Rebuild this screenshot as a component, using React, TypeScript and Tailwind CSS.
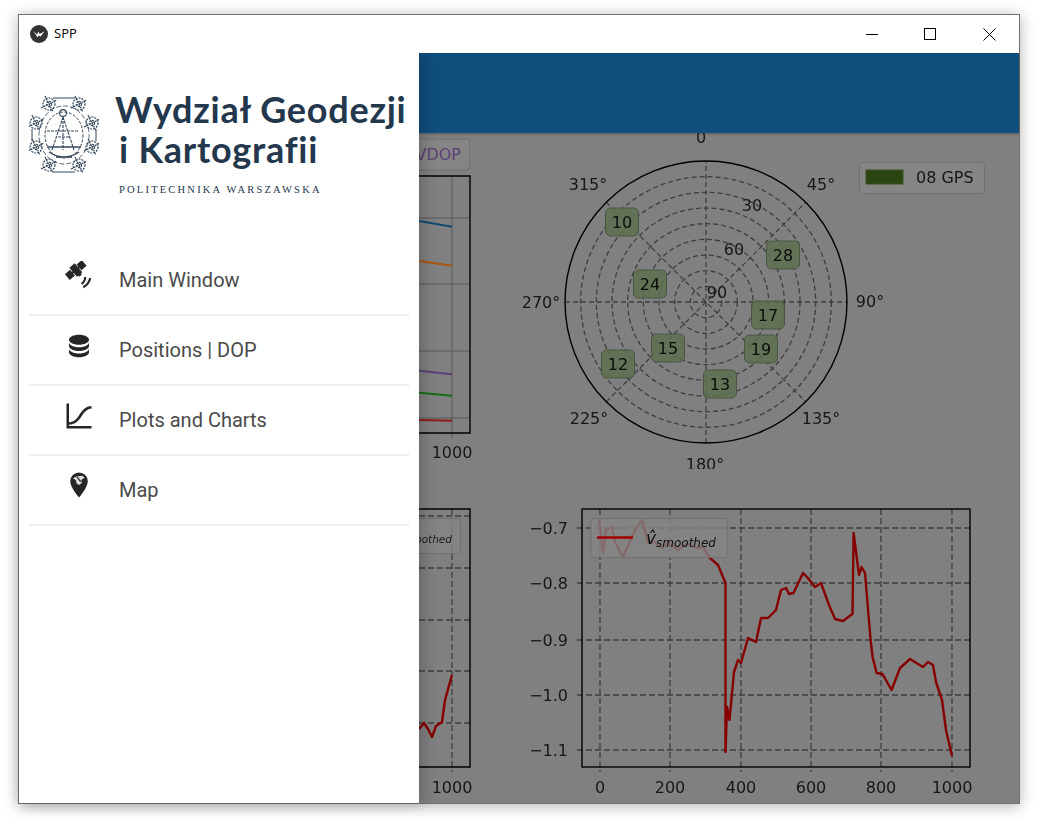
import React from "react";

const nav = [
  { label: "Main Window", icon: "satellite" },
  { label: "Positions | DOP", icon: "database" },
  { label: "Plots and Charts", icon: "chart" },
  { label: "Map", icon: "map" },
];

const sats = [
  { n: "10", x: 622, y: 222 },
  { n: "28", x: 783, y: 255 },
  { n: "24", x: 650, y: 284 },
  { n: "17", x: 768, y: 315 },
  { n: "19", x: 761, y: 349 },
  { n: "15", x: 668, y: 348 },
  { n: "12", x: 618, y: 364 },
  { n: "13", x: 720, y: 384 },
];

const polarLabels = [
  { t: "0", x: 701, y: 143 },
  { t: "45°", x: 821, y: 190 },
  { t: "90°", x: 870, y: 307 },
  { t: "135°", x: 821, y: 424 },
  { t: "180°", x: 705, y: 470 },
  { t: "225°", x: 589, y: 424 },
  { t: "270°", x: 541, y: 308 },
  { t: "315°", x: 588, y: 190 },
];

const vLine =
  "725.5,583 725.5,752 727,707 729.5,720 734,672 738,660 741,663 748,638 756,642 761,618 768,618 776,610 781,590 786,588 789,594 793.5,593 803,573 807,577 815,587 821,583 829,605 835,619 843,621 851,615 852.5,614 853.6,533 859,575 861.5,567 865,573 870.6,640 872.6,657 876.6,673 882.5,674 891.6,690 900,668 910,659 918,664 923,667 928,662 933,665 936,682 942,700 946,730 952,756";
const vLineTop =
  "599,520 603,553 606,530 612,527 615,542 623,557 635,530 642,520 648,543 655,542 662,548 668,543 678,550 687,543 697,548 703,547 710,558 718,565 723,577 725.5,583";

function NavIcon({ name }: { name: string }) {
  if (name === "database") {
    return (
      <svg viewBox="0 0 24 24" className="h-[30px] w-[30px] fill-[#262626]">
        <path d="M12,3C7.58,3 4,4.79 4,7C4,9.21 7.58,11 12,11C16.42,11 20,9.21 20,7C20,4.79 16.42,3 12,3M4,9V12C4,14.21 7.58,16 12,16C16.42,16 20,14.21 20,12V9C20,11.21 16.42,13 12,13C7.58,13 4,11.21 4,9M4,14V17C4,19.21 7.58,21 12,21C16.42,21 20,19.21 20,17V14C20,16.21 16.42,18 12,18C7.58,18 4,16.21 4,14Z" />
      </svg>
    );
  }
  if (name === "chart") {
    return (
      <svg viewBox="0 0 24 24" className="h-[30px] w-[30px] fill-[#262626]">
        <path d="M4,19V20H22V22H2V2H4V17C7,17 10,15 12.1,11.4C15.1,6.4 18.4,4 22,4V6C19.2,6 16.5,8.1 13.9,12.4C11.3,16.8 7.7,19 4,19Z" />
      </svg>
    );
  }
  if (name === "map") {
    return (
      <svg viewBox="0 0.8 24 24" className="h-[30px] w-[30px] fill-[#262626]">
        <path d="M12,2A7,7 0 0,0 5,9C5,14.25 12,22 12,22C12,22 19,14.25 19,9A7,7 0 0,0 12,2Z" />
        <path
          d="M7.2,6.6L10,5.2L14.6,4.6L16.6,6.2L13.6,8L14.4,10L12.4,12L10,10.8L9.6,8.2Z"
          fill="#ffffff"
          fillOpacity="0.85"
        />
        <path d="M10.4,5.4L13.4,9.4" stroke="#262626" strokeWidth="1" fill="none" />
      </svg>
    );
  }
  return (
    <svg viewBox="0 0 24 24" className="h-[30px] w-[30px] fill-[#262626]">
      <g transform="rotate(-40 9.4 7.2)">
        <rect x="0.6" y="4.2" width="5.4" height="6" />
        <rect x="12.8" y="4.2" width="5.4" height="6" />
        <rect x="5" y="6.4" width="9" height="1.6" />
        <rect x="6.6" y="2.6" width="5.6" height="9.4" />
        <rect x="8" y="11.6" width="2.8" height="1.6" />
      </g>
      <path d="M17,12.8A7,7 0 0,1 14,18.4" stroke="#262626" strokeWidth="1.7" fill="none" />
      <path d="M21,13.6A11,11 0 0,1 15.4,21" stroke="#262626" strokeWidth="1.7" fill="none" />
    </svg>
  );
}

function Emblem() {
  const clusters = [
    [48, 104],
    [78, 104],
    [35, 123],
    [91, 123],
    [35, 147],
    [91, 147],
    [48, 165],
    [78, 165],
  ];
  return (
    <svg viewBox="28 95 70 80" className="h-[80px] w-[70px] shrink-0 fill-none stroke-[#33465a] blur-[0.35px]">
      <path d="M52,98H74M52,172H74M31,129V141M95,129V141" strokeWidth="1" />
      <ellipse cx="63" cy="135" rx="25" ry="29" strokeWidth="0.8" strokeDasharray="5 2" />
      <ellipse cx="63" cy="135" rx="19" ry="23" strokeWidth="1" strokeDasharray="3 1.5" />
      <circle cx="62" cy="113" r="3.4" strokeWidth="1.1" />
      <path d="M62,117L51,150M62,117L73,150M62,117V150M57,137H68M46,131H78" strokeWidth="1.1" strokeDasharray="3 1" />
      <path d="M46,147H80M48,152Q63,162 78,152M55,157H71" strokeWidth="1.4" />
      {clusters.map(([x, y]) => (
        <g key={`${x}-${y}`} strokeWidth="1.2" strokeDasharray="2 1">
          <circle cx={x} cy={y} r="6" />
          <circle cx={x} cy={y} r="2.6" />
          <path d={`M${x - 8},${y + 4}L${x + 8},${y - 4}M${x - 4},${y - 8}L${x + 4},${y + 8}`} />
        </g>
      ))}
    </svg>
  );
}

function ChartPanel() {
  const cx = 706;
  const cy = 302;
  const R = 141;
  const rings = [1, 2, 3, 4, 5, 6, 7, 8];
  const spokes = [0, 45, 90, 135];
  const textCls = "fill-[#161616] font-['DejaVu_Sans'] text-[16px]";
  const grid = "#3e3e3e";
  const xTicks = [
    { t: "0", x: 600 },
    { t: "200", x: 670 },
    { t: "400", x: 741 },
    { t: "600", x: 811 },
    { t: "800", x: 881 },
    { t: "1000", x: 952 },
  ];
  const yTicks = [
    { t: "−0.7", y: 528 },
    { t: "−0.8", y: 583 },
    { t: "−0.9", y: 640 },
    { t: "−1.0", y: 695 },
    { t: "−1.1", y: 750 },
  ];
  return (
    <svg viewBox="419 133 600 670" className="h-full w-full blur-[0.6px]">
      {/* top left chart */}
      <rect x="400" y="139" width="69.5" height="31" rx="3" fill="#858585" stroke="#707070" />
      <text x="461" y="160" textAnchor="end" className={textCls} style={{ fill: "#5b3f75" }}>
        VDOP
      </text>
      {[218, 284, 351, 418].map((y) => (
        <line key={y} x1="410" x2="470" y1={y} y2={y} stroke="#585858" />
      ))}
      <line x1="452" x2="452" y1="176" y2="438" stroke="#585858" />
      <line x1="419" x2="452" y1="221" y2="226.7" stroke="#0f4a70" strokeWidth="2" />
      <line x1="419" x2="452" y1="261" y2="265.7" stroke="#a8590f" strokeWidth="2" />
      <line x1="419" x2="452" y1="370.7" y2="374.3" stroke="#5c3f78" strokeWidth="2" />
      <line x1="419" x2="452" y1="392.7" y2="395.7" stroke="#157015" strokeWidth="2" />
      <line x1="419" x2="452" y1="420" y2="420.7" stroke="#8c1c1c" strokeWidth="2" />
      <path d="M410,176H470V433H410" fill="none" stroke="#000" strokeWidth="1.4" />
      <text x="452" y="458" textAnchor="middle" className={textCls}>
        1000
      </text>

      {/* polar plot */}
      {rings.map((r) => (
        <circle
          key={r}
          cx={cx}
          cy={cy}
          r={(R * r) / 9}
          fill="none"
          stroke={grid}
          strokeWidth="1.3"
          strokeDasharray="5 3"
        />
      ))}
      {spokes.map((a) => (
        <line
          key={a}
          x1={cx - R * Math.sin((a * Math.PI) / 180)}
          y1={cy + R * Math.cos((a * Math.PI) / 180)}
          x2={cx + R * Math.sin((a * Math.PI) / 180)}
          y2={cy - R * Math.cos((a * Math.PI) / 180)}
          stroke={grid}
          strokeWidth="1.3"
          strokeDasharray="5 3"
        />
      ))}
      <circle cx={cx} cy={cy} r={R} fill="none" stroke="#000" strokeWidth="1.4" />
      {polarLabels.map((l) => (
        <text key={l.t} x={l.x} y={l.y} textAnchor="middle" className={textCls}>
          {l.t}
        </text>
      ))}
      <rect x="660" y="469" width="90" height="20" fill="#808080" />
      <text x="752" y="211" textAnchor="middle" className={textCls}>
        30
      </text>
      <text x="734" y="255" textAnchor="middle" className={textCls}>
        60
      </text>
      <text x="717" y="298" textAnchor="middle" className={textCls}>
        90
      </text>
      {sats.map((s) => (
        <g key={s.n}>
          <rect
            x={s.x - 16.5}
            y={s.y - 14}
            width="33"
            height="28"
            rx="5"
            fill="#5f7051"
            fillOpacity="0.88"
            stroke="#4a5642"
          />
          <text x={s.x} y={s.y + 6} textAnchor="middle" className={textCls} style={{ fill: "#0c0c0c" }}>
            {s.n}
          </text>
        </g>
      ))}
      <rect x="859.5" y="162.5" width="125" height="31" rx="3" fill="#858585" stroke="#707070" />
      <rect x="866" y="170" width="37" height="14" fill="#2a4510" stroke="#3a5222" />
      <text x="916" y="183" className={textCls}>
        08 GPS
      </text>

      {/* bottom left chart */}
      {[516, 568, 620, 671, 723].map((y) => (
        <line key={y} x1="410" x2="470" y1={y} y2={y} stroke={grid} strokeWidth="1.3" strokeDasharray="6 3" />
      ))}
      <line x1="452" x2="452" y1="509" y2="772" stroke={grid} strokeWidth="1.3" strokeDasharray="6 3" />
      <polyline
        points="419,729 424,723 428,729 432,737 436,726 442,722 445,700 452,675"
        fill="none"
        stroke="#860000"
        strokeWidth="2.4"
        strokeLinejoin="round"
      />
      <rect x="400" y="518.5" width="60.5" height="35" rx="3" fill="#858585" fillOpacity="0.8" stroke="#707070" />
      <text
        x="452"
        y="543"
        textAnchor="end"
        className="fill-[#202020] font-['DejaVu_Sans'] text-[10.5px] italic"
      >
        smoothed
      </text>
      <path d="M410,509H470V767H410" fill="none" stroke="#000" strokeWidth="1.4" />
      <text x="452" y="793" textAnchor="middle" className={textCls}>
        1000
      </text>

      {/* bottom right chart */}
      {yTicks.map((t) => (
        <g key={t.t}>
          <line x1="577" x2="970" y1={t.y} y2={t.y} stroke={grid} strokeWidth="1.3" strokeDasharray="6 3" />
          <text x="568" y={t.y + 6} textAnchor="end" className={textCls}>
            {t.t}
          </text>
        </g>
      ))}
      {xTicks.map((t) => (
        <g key={t.t}>
          <line x1={t.x} x2={t.x} y1="509" y2="772" stroke={grid} strokeWidth="1.3" strokeDasharray="6 3" />
          <text x={t.x} y="793" textAnchor="middle" className={textCls}>
            {t.t}
          </text>
        </g>
      ))}
      <polyline points={vLineTop} fill="none" stroke="#860000" strokeWidth="2.4" strokeLinejoin="round" />
      <polyline points={vLine} fill="none" stroke="#860000" strokeWidth="2.4" strokeLinejoin="round" />
      <rect x="591" y="518.5" width="136" height="39" rx="3" fill="#858585" fillOpacity="0.8" stroke="#707070" />
      <line x1="597" x2="633" y1="537.5" y2="537.5" stroke="#a00000" strokeWidth="2.5" />
      <text x="646" y="544" className="fill-[#101010] font-['DejaVu_Sans'] text-[17px] italic">
        v̂
      </text>
      <text x="656" y="547" className="fill-[#101010] font-['DejaVu_Sans'] text-[12px] italic">
        smoothed
      </text>
      <rect x="582" y="509" width="388" height="258" fill="none" stroke="#000" strokeWidth="1.4" />
    </svg>
  );
}

export default function App() {
  return (
    <div className="h-[828px] w-[1044px] overflow-hidden bg-white pl-[18px] pt-[14px]">
      <div className="flex h-[790px] w-[1002px] flex-col border border-[#707070] bg-white shadow-[0_2px_14px_rgba(0,0,0,0.3)]">
        {/* title bar */}
        <div className="relative z-20 flex h-[38px] shrink-0 items-center justify-between bg-white">
          <div className="flex items-center gap-[6px] pl-[11px]">
            <svg viewBox="0 0 18 18" className="h-[18px] w-[18px]">
              <circle cx="9" cy="9" r="9" fill="#333333" />
              <path d="M3.5,6L7,9.5L8.5,6.5L9.5,9L14.5,6.5L10.5,11.5L8.5,10.5L7.5,12.5Z" fill="#ffffff" />
            </svg>
            <span className="font-['Open_Sans'] text-[13px] text-black">SPP</span>
          </div>
          <div className="flex items-center">
            <div className="flex h-[38px] w-[58px] items-center justify-center">
              <div className="h-px w-[12px] bg-black" />
            </div>
            <div className="flex h-[38px] w-[58px] items-center justify-center">
              <div className="h-[12px] w-[12px] border border-black" />
            </div>
            <div className="flex h-[38px] w-[60px] items-center justify-center">
              <svg viewBox="0 0 13 13" className="h-[13px] w-[13px] stroke-black">
                <path d="M0.5,0.5L12.5,12.5M12.5,0.5L0.5,12.5" strokeWidth="1" fill="none" />
              </svg>
            </div>
          </div>
        </div>

        <div className="flex min-h-0 flex-1">
          {/* drawer */}
          <aside className="relative z-10 w-[400px] shrink-0 bg-white px-[10px] shadow-[4px_0_14px_rgba(0,0,0,0.22)]">
            <div className="flex items-start gap-[16px] pt-[42px]">
              <Emblem />
              <div className="-mt-[6px]">
                <div className="whitespace-nowrap font-['Lato'] text-[36px] font-bold leading-[40px] tracking-[0.75px] text-[#23374d]">
                  Wydział Geodezji
                  <br />
                  <span className="pl-[4px]">i Kartografii</span>
                </div>
                <div className="mt-[15px] whitespace-nowrap pl-[4px] font-['Liberation_Serif'] text-[10.5px] leading-[12px] tracking-[2.2px] text-[#23374d]">
                  POLITECHNIKA WARSZAWSKA
                </div>
              </div>
            </div>

            <nav className="mt-[50px]">
              {nav.map((item) => (
                <div
                  key={item.label}
                  className="flex h-[70px] items-center gap-[25px] border-b-2 border-[#eeeeee] pl-[35px]"
                >
                  <div className="mb-[8px]">
                    <NavIcon name={item.icon} />
                  </div>
                  <span className="font-['Roboto'] text-[20px] text-[#4a4a4a]">{item.label}</span>
                </div>
              ))}
            </nav>
          </aside>

          {/* dimmed content */}
          <main className="flex min-w-0 flex-1 flex-col bg-[#808080]">
            <div className="h-[80px] shrink-0 bg-[#104e7e] shadow-[0_1px_2px_rgba(0,0,0,0.3)]" />
            <div className="min-h-0 flex-1 overflow-hidden">
              <ChartPanel />
            </div>
          </main>
        </div>
      </div>
    </div>
  );
}
